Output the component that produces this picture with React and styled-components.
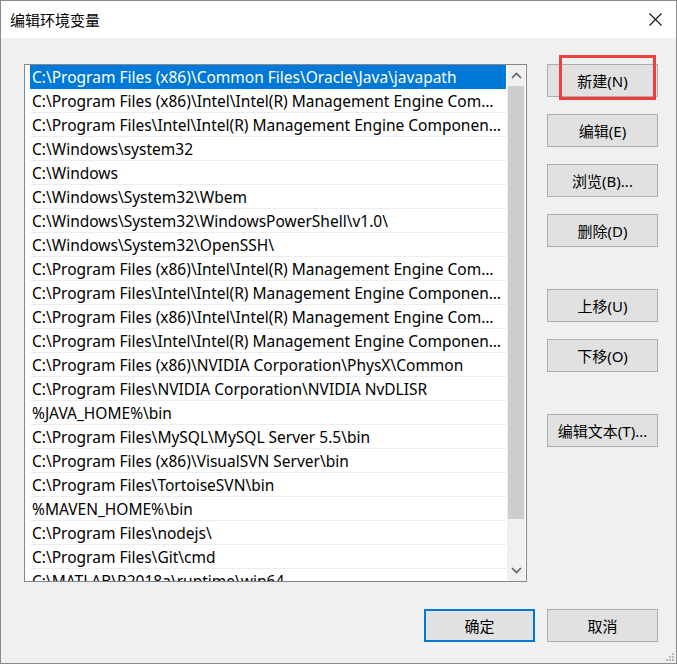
import React from "react";
import styled, { createGlobalStyle } from "styled-components";

const paths = [
  "C:\\Program Files (x86)\\Common Files\\Oracle\\Java\\javapath",
  "C:\\Program Files (x86)\\Intel\\Intel(R) Management Engine Components\\iCLS\\",
  "C:\\Program Files\\Intel\\Intel(R) Management Engine Components\\iCLS\\",
  "C:\\Windows\\system32",
  "C:\\Windows",
  "C:\\Windows\\System32\\Wbem",
  "C:\\Windows\\System32\\WindowsPowerShell\\v1.0\\",
  "C:\\Windows\\System32\\OpenSSH\\",
  "C:\\Program Files (x86)\\Intel\\Intel(R) Management Engine Components\\DAL",
  "C:\\Program Files\\Intel\\Intel(R) Management Engine Components\\DAL",
  "C:\\Program Files (x86)\\Intel\\Intel(R) Management Engine Components\\IPT",
  "C:\\Program Files\\Intel\\Intel(R) Management Engine Components\\IPT",
  "C:\\Program Files (x86)\\NVIDIA Corporation\\PhysX\\Common",
  "C:\\Program Files\\NVIDIA Corporation\\NVIDIA NvDLISR",
  "%JAVA_HOME%\\bin",
  "C:\\Program Files\\MySQL\\MySQL Server 5.5\\bin",
  "C:\\Program Files (x86)\\VisualSVN Server\\bin",
  "C:\\Program Files\\TortoiseSVN\\bin",
  "%MAVEN_HOME%\\bin",
  "C:\\Program Files\\nodejs\\",
  "C:\\Program Files\\Git\\cmd",
  "C:\\MATLAB\\R2018a\\runtime\\win64",
];

const App = () => {
  return (
    <>
      <GlobalStyle />
      <Window>
        <TitleBar>
          <Title>编辑环境变量</Title>
          <CloseIcon viewBox="0 0 13 13">
            <path d="M0.5 0.5 L12.5 12.5 M12.5 0.5 L0.5 12.5" stroke="#111" strokeWidth="1.1" fill="none" />
          </CloseIcon>
        </TitleBar>
        <Body>
          <Main>
            <ListBox>
              <Rows>
                {paths.map((p, i) => (
                  <Row key={i} $selected={i === 0}>
                    <RowText>{p}</RowText>
                  </Row>
                ))}
              </Rows>
              <ScrollBar>
                <Arrow>
                  <svg width="11" height="7" viewBox="0 0 11 7">
                    <path d="M1 6 L5.5 1.5 L10 6" stroke="#606060" strokeWidth="1.6" fill="none" />
                  </svg>
                </Arrow>
                <Track>
                  <Thumb />
                </Track>
                <Arrow>
                  <svg width="11" height="7" viewBox="0 0 11 7">
                    <path d="M1 1 L5.5 5.5 L10 1" stroke="#606060" strokeWidth="1.6" fill="none" />
                  </svg>
                </Arrow>
              </ScrollBar>
            </ListBox>
            <Side>
              <Highlighted>
                <Button>新建(N)</Button>
                <RedMark />
              </Highlighted>
              <Button>编辑(E)</Button>
              <Button>浏览(B)...</Button>
              <Button>删除(D)</Button>
              <Button $gap={42}>上移(U)</Button>
              <Button>下移(O)</Button>
              <Button $gap={42}>编辑文本(T)...</Button>
            </Side>
          </Main>
          <Footer>
            <Button $primary>确定</Button>
            <Button>取消</Button>
          </Footer>
          <Grip viewBox="0 0 12 12">
            {[
              [9, 0],
              [6, 3],
              [9, 3],
              [3, 6],
              [6, 6],
              [9, 6],
            ].map(([x, y], i) => (
              <rect key={i} x={x} y={y + 3} width="2" height="2" fill="#b8b8b8" />
            ))}
          </Grip>
        </Body>
      </Window>
    </>
  );
};

export default App;

const GlobalStyle = createGlobalStyle`
  html, body {
    margin: 0;
    padding: 0;
    background: #ffffff;
  }
  * {
    box-sizing: border-box;
  }
`;

const Window = styled.div`
  width: 677px;
  height: 664px;
  border: 1px solid #8a8a8a;
  display: flex;
  flex-direction: column;
  font-family: "Noto Sans", "Noto Sans CJK SC", sans-serif;
  color: #000;
  overflow: hidden;
`;

const TitleBar = styled.div`
  height: 37px;
  background: #ffffff;
  display: flex;
  align-items: center;
  justify-content: space-between;
  padding: 0 14px 0 9px;
  flex-shrink: 0;
`;

const Title = styled.div`
  font-family: "Noto Sans CJK SC", sans-serif;
  font-size: 15px;
  line-height: 20px;
  margin-top: 1px;
`;

const CloseIcon = styled.svg`
  width: 13px;
  height: 13px;
`;

const Body = styled.div`
  flex: 1;
  background: #f0f0f0;
  padding: 26px 18px 0 23px;
  position: relative;
  display: flex;
  flex-direction: column;
`;

const Main = styled.div`
  display: flex;
  gap: 20px;
`;

const ListBox = styled.div`
  width: 504px;
  height: 518px;
  border: 1px solid #828790;
  background: #ffffff;
  display: flex;
  padding: 0 1px 0 5px;
  overflow: hidden;
`;

const Rows = styled.div`
  flex: 1;
  min-width: 0;
  display: flex;
  flex-direction: column;
  overflow: hidden;
`;

const Row = styled.div`
  height: 24px;
  flex-shrink: 0;
  display: flex;
  align-items: center;
  padding: 1px 4px 0 2px;
  margin-right: 1px;
  background: ${(p) => (p.$selected ? "#0078d7" : "#ffffff")};
  color: ${(p) => (p.$selected ? "#ffffff" : "#000000")};
  border-bottom: 1px solid ${(p) => (p.$selected ? "#0078d7" : "#ededed")};
`;

const RowText = styled.span`
  font-size: 15.5px;
  white-space: nowrap;
  overflow: hidden;
  text-overflow: ellipsis;
  line-height: 21px;
`;

const ScrollBar = styled.div`
  width: 18px;
  flex-shrink: 0;
  background: #f0f0f0;
  display: flex;
  flex-direction: column;
`;

const Arrow = styled.div`
  height: 21px;
  display: flex;
  align-items: center;
  justify-content: center;
  flex-shrink: 0;
`;

const Track = styled.div`
  flex: 1;
  padding: 0 1px;
`;

const Thumb = styled.div`
  height: 433px;
  background: #cdcdcd;
`;

const Side = styled.div`
  display: flex;
  flex-direction: column;
  gap: 17px;
`;

const Highlighted = styled.div`
  position: relative;
`;

const RedMark = styled.div`
  position: absolute;
  left: 12px;
  top: -9px;
  width: 97px;
  height: 45px;
  border: 3px solid #ee3f3f;
  pointer-events: none;
`;

const Button = styled.div`
  width: 111px;
  height: 33px;
  flex-shrink: 0;
  display: flex;
  align-items: center;
  justify-content: center;
  background: #e1e1e1;
  border: ${(p) => (p.$primary ? "2px solid #0078d7" : "1px solid #adadad")};
  font-family: "Noto Sans", "Noto Sans CJK SC", sans-serif;
  font-size: 15px;
  margin-top: ${(p) => (p.$gap ? p.$gap - 17 : 0)}px;
`;

const Footer = styled.div`
  display: flex;
  justify-content: flex-end;
  gap: 12px;
  margin-top: 27px;
`;

const Grip = styled.svg`
  position: absolute;
  right: 1px;
  bottom: 1px;
  width: 12px;
  height: 12px;
`;
